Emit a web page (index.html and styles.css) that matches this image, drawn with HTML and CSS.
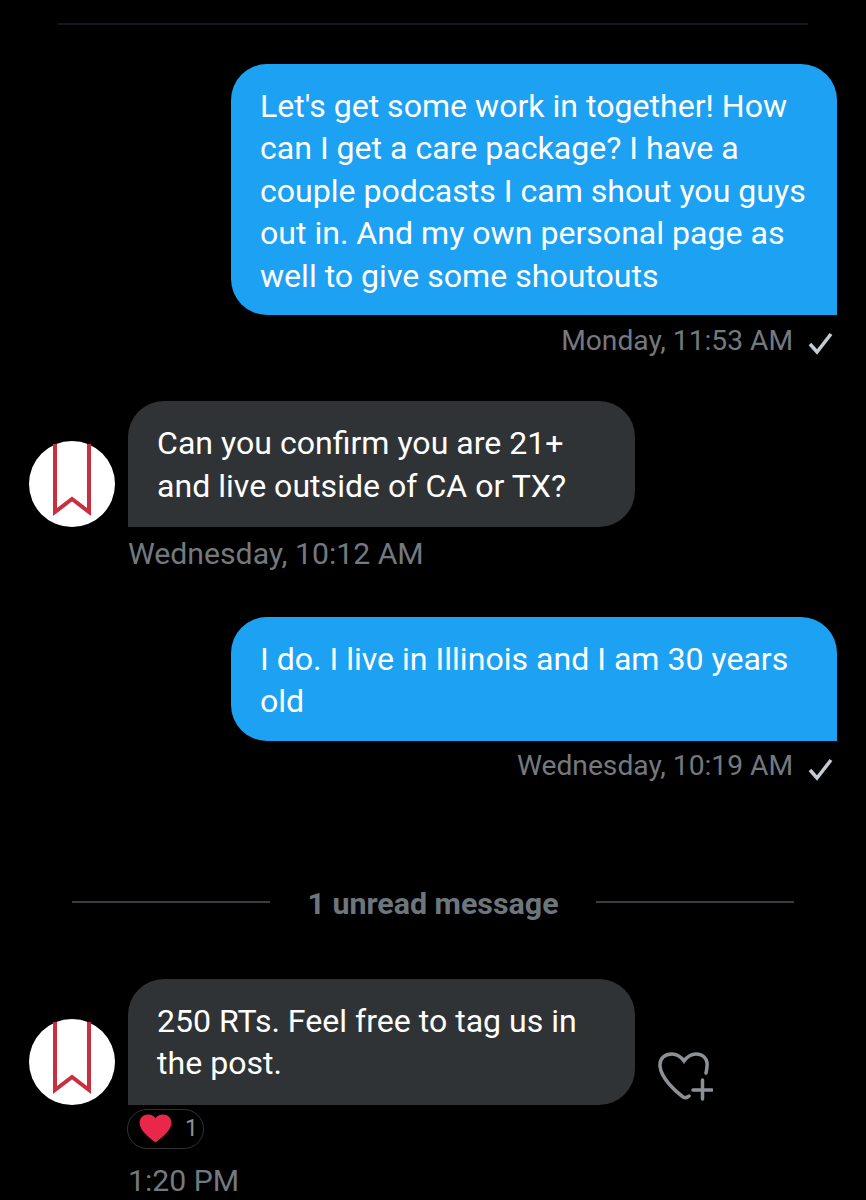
FILE: index.html
```html
<!DOCTYPE html>
<html lang="en">
<head>
<meta charset="utf-8">
<title>Messages</title>
<link rel="stylesheet" href="styles.css">
</head>
<body>
<main class="thread">
  <div class="top-rule"></div>

  <section class="group out first">
    <div class="bubble sent">Let's get some work in together! How can I get a care package? I have a couple podcasts I cam shout you guys out in. And my own personal page as well to give some shoutouts</div>
    <div class="meta meta-out">
      <span>Monday, 11:53 AM</span>
      <svg class="check" viewBox="0 0 28 24"><path d="M4 13 L11 21 L25 3"/></svg>
    </div>
  </section>

  <section class="group in second">
    <div class="row">
      <svg class="avatar" viewBox="0 0 86 86"><circle cx="43" cy="43" r="43" fill="#fff"/><path class="mark" d="M26 3 V71 L43 58 L60 71 V3"/></svg>
      <div class="bubble received">Can you confirm you are 21+ and live outside of CA or TX?</div>
    </div>
    <div class="meta meta-in">Wednesday, 10:12 AM</div>
  </section>

  <section class="group out third">
    <div class="bubble sent">I do. I live in Illinois and I am 30 years old</div>
    <div class="meta meta-out">
      <span>Wednesday, 10:19 AM</span>
      <svg class="check" viewBox="0 0 28 24"><path d="M4 13 L11 21 L25 3"/></svg>
    </div>
  </section>

  <div class="unread">
    <span class="unread-line"></span>
    <span class="unread-text">1 unread message</span>
    <span class="unread-line"></span>
  </div>

  <section class="group in">
    <div class="row">
      <svg class="avatar" viewBox="0 0 86 86"><circle cx="43" cy="43" r="43" fill="#fff"/><path class="mark" d="M26 3 V71 L43 58 L60 71 V3"/></svg>
      <div class="bubble received">250 RTs. Feel free to tag us in the post.</div>
      <svg class="react-add" viewBox="0 0 55 50"><path d="M31 44 C29 46 27 46 25 45 C17 39 3 26 2 14 C1.500 6 7 2 14 2 C19 2 23 5 26 9 C29 5 33 2 38 2 C45 2 50 7 49 14 C49 17 48.500 19 48 21"/><path d="M35 38 H54 M44.500 28 V47"/></svg>
    </div>
    <div class="reaction">
      <svg class="heart" viewBox="0 0 34 30"><path d="M17 29.500 C10 24 .5 17 .5 9 C.5 4 4.500 .5 9.500 .5 C13 .5 15.500 2 17 4.500 C18.500 2 21 .5 24.500 .5 C29.500 .5 33.500 4 33.500 9 C33.500 17 24 24 17 29.500 Z"/></svg>
      <span class="count">1</span>
    </div>
    <div class="meta meta-in meta-last">1:20 PM</div>
  </section>
</main>
</body>
</html>
```

FILE: styles.css
```css
* { box-sizing: border-box; }

html, body {
  margin: 0;
  background: #000;
}

body {
  height: 1200px;
  overflow: hidden;
  font-family: Roboto, "Liberation Sans", sans-serif;
}

.thread {
  display: flex;
  flex-direction: column;
  padding: 23px 29px 0 29px;
}

.top-rule {
  height: 2px;
  margin: 0 29px 0 29px;
  background: #14171f;
}

.group { display: flex; flex-direction: column; }
.out { align-items: flex-end; }
.first { margin-top: 39px; }
.second { margin-top: 36px; }
.third { margin-top: 38px; }

.bubble {
  font-size: 32.1px;
  line-height: 42.5px;
  color: #fff;
}

.sent {
  width: 606px;
  padding: 20.500px 29px 18px 29px;
  background: #1da1f2;
  border-radius: 36px 36px 0 36px;
}

.received {
  width: 507px;
  padding: 21px 29px 20px 29px;
  background: #2f3336;
  border-radius: 36px 36px 36px 0;
}

.row {
  display: flex;
  align-items: flex-end;
}

.avatar {
  flex: none;
  width: 86px;
  height: 86px;
  margin-right: 13px;
}

.mark {
  fill: none;
  stroke: #c8303f;
  stroke-width: 4;
}

.meta {
  display: flex;
  align-items: center;
  height: 50px;
  font-size: 30.2px;
  color: #74797f;
}

.meta-out { gap: 13px; padding-right: 3px; font-size: 28.2px; }
.meta-in { margin-left: 99px; height: 52px; }

.check {
  width: 28px;
  height: 24px;
  margin-top: 6px;
  fill: none;
  stroke: #c4ccd2;
  stroke-width: 3.500;
}

.unread {
  display: flex;
  align-items: center;
  justify-content: center;
  gap: 37px;
  margin: 97px 43px 59px 43px;
}

.unread-line {
  flex: 1;
  height: 2px;
  margin-bottom: 4px;
  background: #3a3d42;
}

.unread-text {
  font-size: 30.4px;
  font-weight: 700;
  line-height: 32px;
  color: #6e767d;
}

.react-add {
  flex: none;
  width: 55px;
  height: 50px;
  margin-left: 23px;
  margin-bottom: 3px;
  fill: none;
  stroke: #8b9196;
  stroke-width: 3.500;
  stroke-linecap: round;
}

.reaction {
  display: flex;
  align-items: center;
  gap: 13px;
  width: 77px;
  height: 40px;
  margin: 4px 0 0 98px;
  padding-left: 11px;
  border: 1px solid #2f3336;
  border-radius: 20px;
}

.heart {
  flex: none;
  width: 33px;
  height: 29px;
  fill: #e8274b;
}

.count {
  font-size: 23px;
  color: #8b9196;
}

.meta-last { height: 38px; margin-top: 13px; }
```
